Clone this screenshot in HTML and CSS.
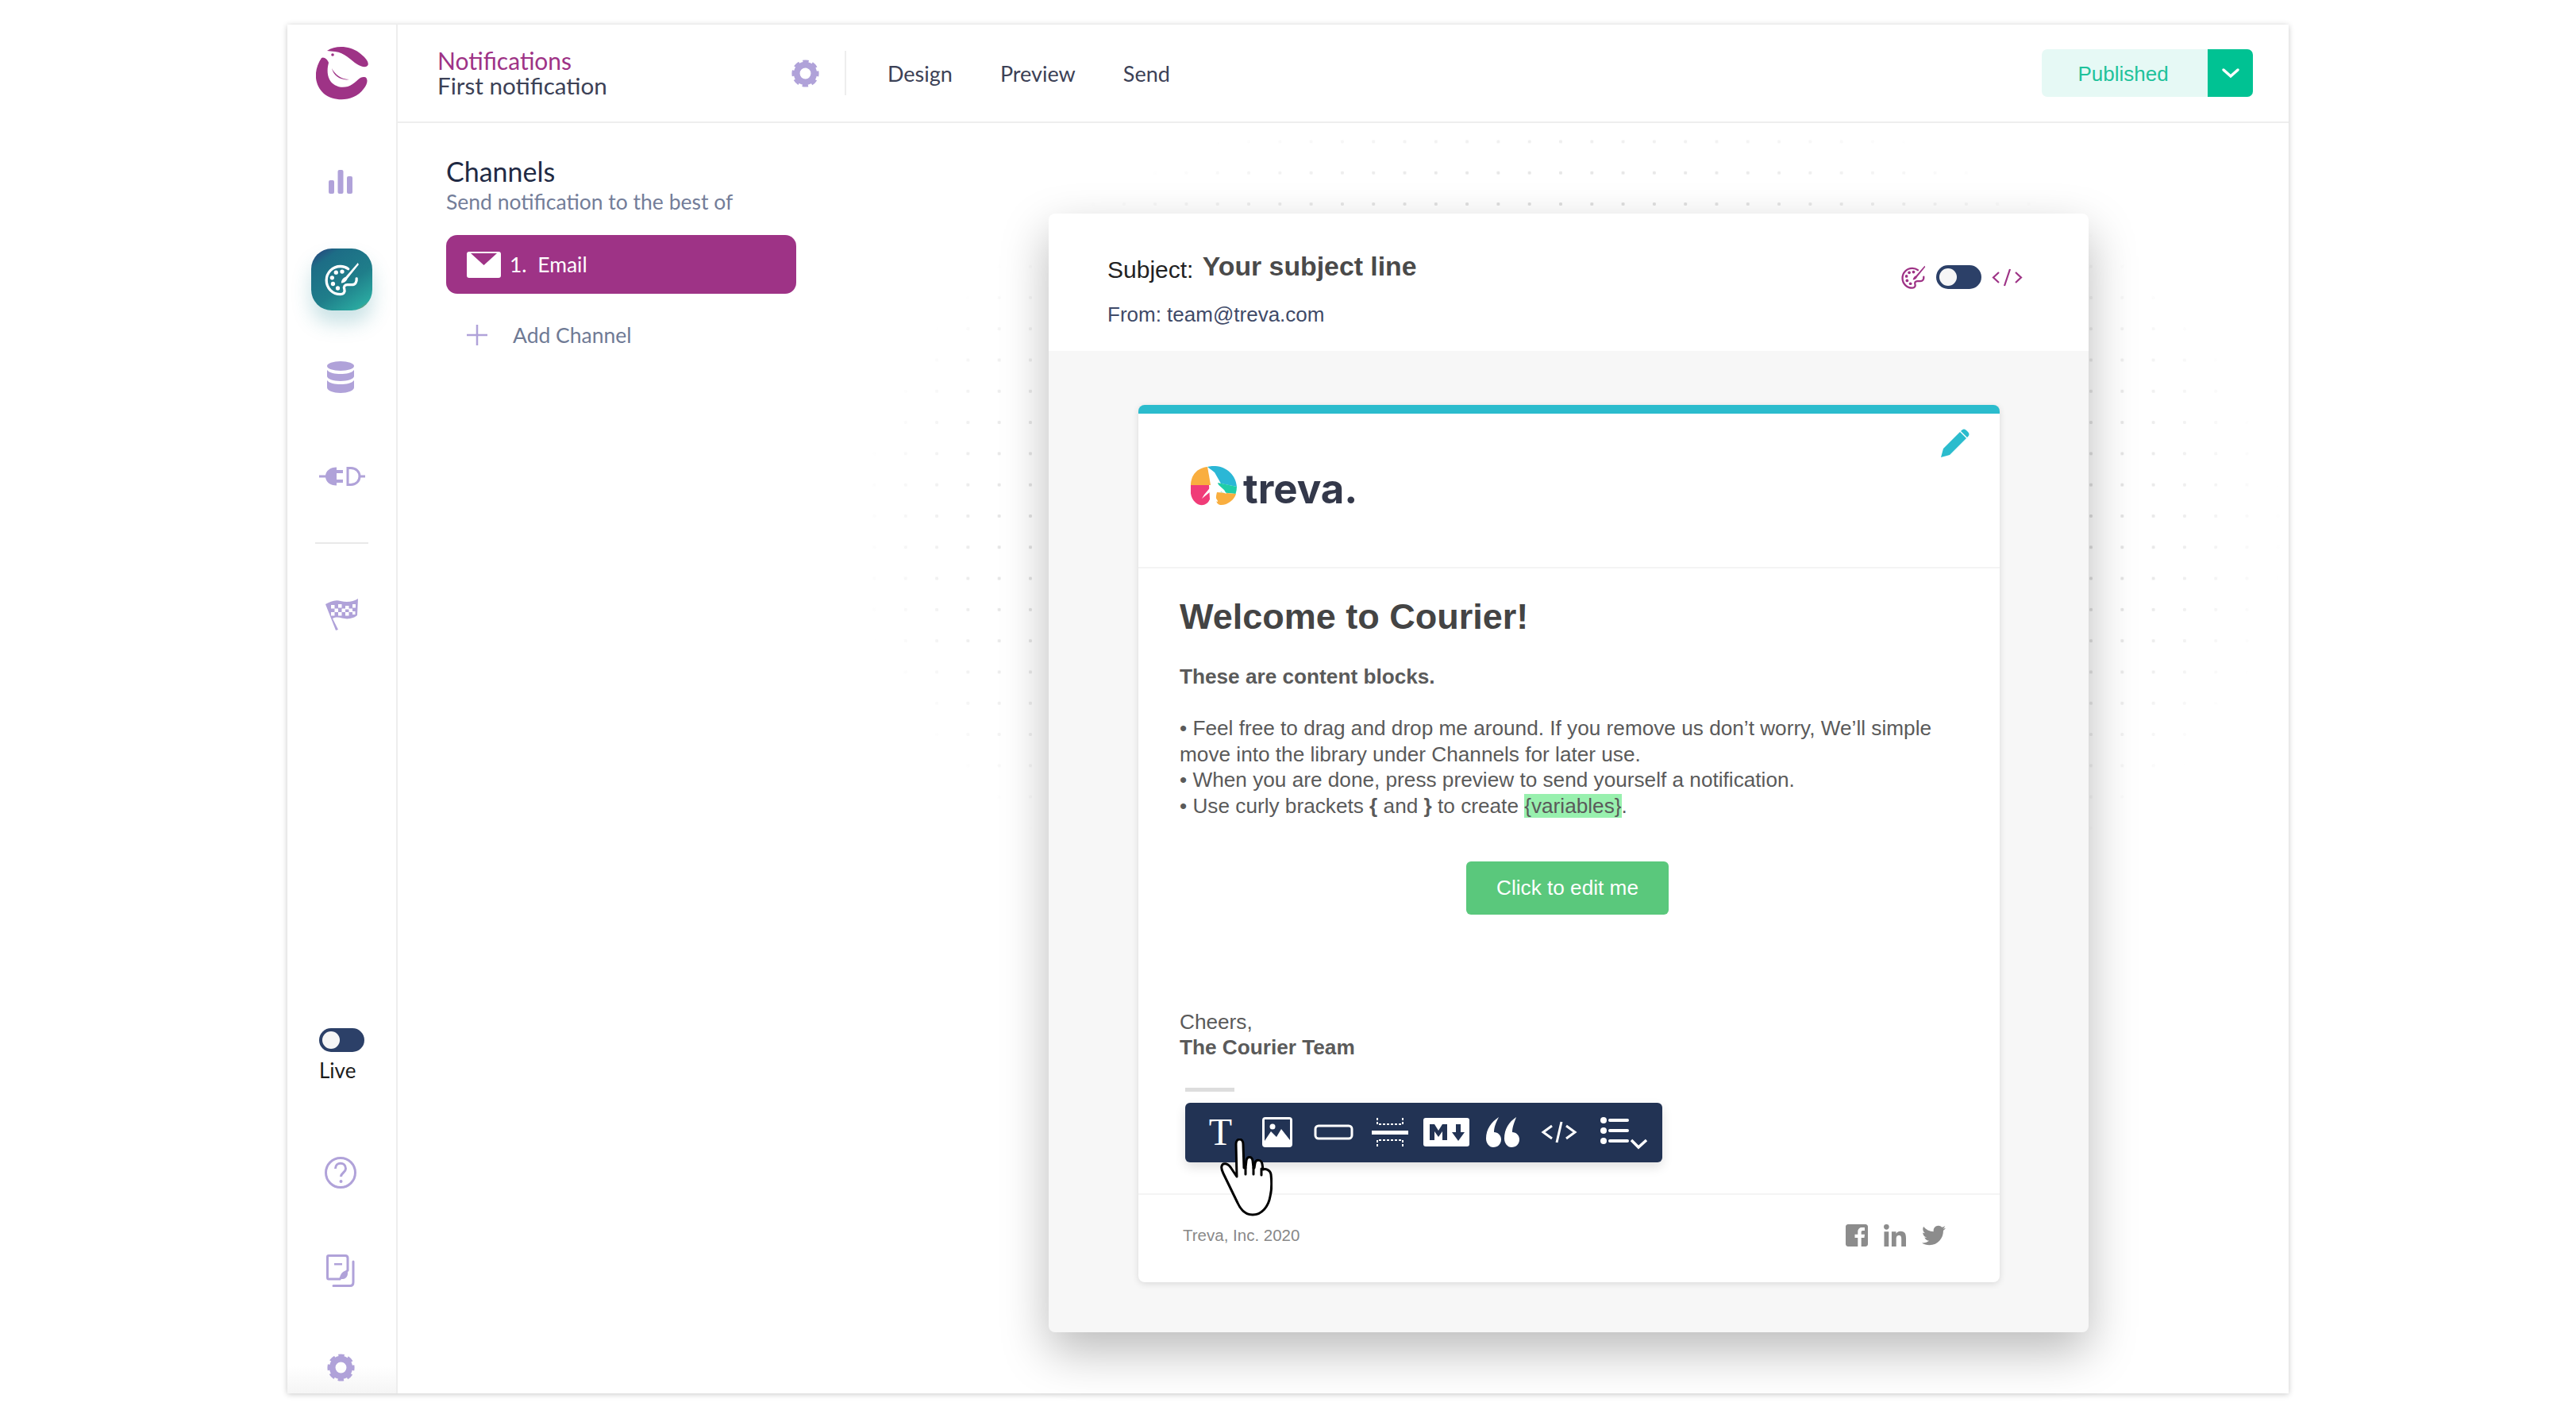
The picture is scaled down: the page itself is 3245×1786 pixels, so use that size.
FILE: index.html
```html
<!DOCTYPE html>
<html lang="en">

<head>
    <meta charset="UTF-8">
    <meta name="viewport" content="width=device-width, initial-scale=1.0">
    <title>First notification</title>
    <link rel="stylesheet" href="styles.css">
</head>

<body>
    <svg class="defs" width="0" height="0">
        <symbol id="gear" viewBox="0 0 34 34">
            <circle cx="17" cy="17" r="10.5" fill="none" stroke="currentColor" stroke-width="7.5"></circle>
            <circle cx="17" cy="17" r="14.6" fill="none" stroke="currentColor" stroke-width="4" stroke-dasharray="7 4.47" stroke-dashoffset="3.5"></circle>
        </symbol>
        <symbol id="palette" viewBox="0 0 40 40">
            <path d="M27 8C24 5.500 21 5 18 5 9 5 2 12 2 21c0 9 7 16 16 16 4 0 5.500-3 4.500-6-1-3 .5-5 3.500-5h5c4 0 6-3 5.500-7" fill="none" stroke="currentColor" stroke-width="3" stroke-linecap="round"></path>
            <circle cx="13" cy="12" r="2.400" fill="currentColor"></circle>
            <circle cx="8.500" cy="18" r="2.400" fill="currentColor"></circle>
            <circle cx="9.500" cy="25" r="2.400" fill="currentColor"></circle>
            <circle cx="15" cy="30" r="2.400" fill="currentColor"></circle>
            <circle cx="20" cy="11" r="2.400" fill="currentColor"></circle>
            <path d="M38 1 24 17c-3 1-5 4-5 7 3 0 6-2 7-5L39 3z" fill="currentColor"></path>
        </symbol>
    </svg>

    <div class="app">
        <aside class="sidebar">
            <svg class="logo" viewBox="0 0 66 68">
                <path d="M14 6C24-1 42-1 54 8c8 6 13 12 11.500 16-2.500 4-8.500 2-13.500-1C44 18 36 8 24 7c-4-.5-7-.5-10-1z"></path>
                <path d="M7 15C-3 30-3 48 10 60c14 11 38 10 50-6 7-8 5-16 0-15-5 0-8 5-14 9-10 7-24 4-29-6-4-8-2-17-1-21-1-4-6-8-9-6z"></path>
                <path d="M20 28c4 8 12 14 22 14-9 2-20-4-22-14z"></path>
                <circle cx="21" cy="11" r="1.800"></circle>
            </svg>

            <svg class="side-icon nudge bars" width="30" height="30" viewBox="0 0 30 30">
                <rect x="0" y="13" width="7" height="17" rx="2"></rect>
                <rect x="11.500" y="0" width="7" height="30" rx="2"></rect>
                <rect x="23" y="8" width="7" height="22" rx="2"></rect>
            </svg>

            <div class="tile">
                <svg width="44" height="44"><use href="#palette"></use></svg>
            </div>

            <svg class="side-icon nudge db" width="36" height="40" viewBox="0 0 36 40">
                <ellipse cx="18" cy="6" rx="17" ry="6"></ellipse>
                <path d="M1 11c3 4 10 5 17 5s14-1 17-5v8c0 3-8 6-17 6S1 22 1 19z"></path>
                <path d="M1 24c3 4 10 5 17 5s14-1 17-5v9c0 4-8 7-17 7S1 37 1 33z"></path>
            </svg>

            <svg class="side-icon plug" width="58" height="24" viewBox="0 0 58 24">
                <path d="M0 10.500h9v3H0zM8 12C8 5 14 .5 22 .5v23C14 23.500 8 19 8 12z"></path>
                <path d="M22 4h8v4h-8zM22 16h8v4h-8z"></path>
                <path d="M36 1.500h4c7 0 11 5 11 10.500s-4 10.500-11 10.500h-4z" fill="none" stroke="#b0a2d9" stroke-width="3"></path>
                <path d="M50 10.500h8v3h-8z"></path>
            </svg>

            <div class="side-rule"></div>

            <svg class="side-icon flag" width="42" height="42" viewBox="0 0 42 42">
                <path d="M0 8 13 41l3-1-7-14c8-4 13 2 22 0 4-1 7-2 9-4l1-21C35 5 27 6 19 4 12 2 6 5 0 8z"></path>
                <path d="M7 9h4.500v4.500H7zM16 8h4.500v4.500H16zM25 10h4.500v4.500H25zM34 8h4v4.500h-4zM11.500 13.500H16V18h-4.500zM20.500 13.500H25V18h-4.500zM29.500 13.500H34V18h-4.500zM7 18h4.500v4.500H7zM16 18h4.500v4.500H16zM25 18h4.500v4.500H25zM34 17h3.500v4H34z" fill="#fff"></path>
            </svg>

            <div class="toggle live-toggle"><span class="knob"></span></div>
            <div class="live-label">Live</div>

            <svg class="side-icon nudge help" width="40" height="40" viewBox="0 0 40 40">
                <circle cx="20" cy="20" r="18.500" fill="none" stroke="#b0a2d9" stroke-width="3"></circle>
                <path d="M13.500 15c0-9 13-9 13 0 0 5-6 5-6 10" fill="none" stroke="#b0a2d9" stroke-width="3"></path>
                <circle cx="20.500" cy="31" r="2"></circle>
            </svg>

            <svg class="side-icon nudge pages" width="36" height="41" viewBox="0 0 36 41">
                <path d="M3 1.500h21c2 0 3 1 3 3V20L17 31H3c-1 0-1.500-1-1.500-2V3c0-1 .5-1.500 1.500-1.500z" fill="none" stroke="#b0a2d9" stroke-width="3"></path>
                <path d="M10 11h10v2.500H10zM27 20v4c0 4-3 7-6 7h-4c0-6 4-11 10-11z"></path>
                <path d="M34 9v26c0 3-1 4.500-4 4.500H9" fill="none" stroke="#b0a2d9" stroke-width="3" stroke-linecap="round"></path>
            </svg>

            <svg class="side-gear nudge" width="35" height="35"><use href="#gear"></use></svg>
        </aside>

        <main class="main">
            <header class="topbar">
                <div class="crumbs">
                    <div class="crumb-parent">Notifications</div>
                    <div class="crumb-name">First notification</div>
                </div>
                <svg class="top-gear" width="35" height="35"><use href="#gear"></use></svg>
                <nav class="tabs">
                    <span>Design</span>
                    <span>Preview</span>
                    <span>Send</span>
                </nav>
                <div class="publish">
                    <div class="publish-label">Published</div>
                    <div class="publish-arrow">
                        <svg width="24" height="14" viewBox="0 0 24 14"><path d="M3 3l9 8 9-8" fill="none" stroke="#fff" stroke-width="3.500" stroke-linecap="round"></path></svg>
                    </div>
                </div>
            </header>

            <section class="content">
                <div class="dots"></div>

                <div class="channels">
                    <h2>Channels</h2>
                    <p>Send notification to the best of</p>
                    <div class="channel-active">
                        <svg width="43" height="33" viewBox="0 0 43 33">
                            <rect width="43" height="33" rx="3" fill="#fff"></rect>
                            <path d="M5 2h33L21.500 17z" fill="#9e3386"></path>
                        </svg>
                        <span>1.&nbsp; Email</span>
                    </div>
                    <div class="channel-add">
                        <svg width="26" height="26" viewBox="0 0 26 26"><path d="M13 0v26M0 13h26" stroke="#b0a2d9" stroke-width="2.500"></path></svg>
                        <span>Add Channel</span>
                    </div>
                </div>

                <div class="preview">
                    <div class="preview-head">
                        <div>
                            <div class="subject"><span class="subject-label">Subject:</span> <b>Your subject line</b></div>
                            <div class="from">From: team@treva.com</div>
                        </div>
                        <div class="mode">
                            <svg class="mode-palette" width="31" height="31"><use href="#palette"></use></svg>
                            <div class="toggle"><span class="knob"></span></div>
                            <svg width="39" height="25" viewBox="0 0 39 25">
                                <path d="M9 6 2 12.500 9 19M30 6l7 6.500L30 19M23 2l-7 21" fill="none" stroke="#9e3386" stroke-width="2.200"></path>
                            </svg>
                        </div>
                    </div>

                    <div class="preview-body">
                        <div class="email">
                            <svg class="pencil" width="36" height="36" viewBox="0 0 36 36">
                                <path d="M0 36l3-11L24 4l8 8-21 21zM26 2c2-2 4-2 6 0l2 2c2 2 2 4 0 6l-1 1-8-8z" fill="#2bbccd"></path>
                            </svg>

                            <div class="email-logo">
                                <svg width="58" height="50" viewBox="0 0 58 50">
                                    <path d="M21 1C9 2 0 11 0 24l25 0-2-12z" fill="#f9ae3f"></path>
                                    <path d="M21 1c3-1 7-1 10-1 15 1 26 12 27 26L38 22 30 8z" fill="#2bb7d6"></path>
                                    <path d="M58 26c0 3-.5 6-1.500 9L38 33l-4-12z" fill="#1fcda8"></path>
                                    <path d="M0 24c-1 9 0 17 6 22 7 6 15 3 18-4l-1-18z" fill="#f03c78"></path>
                                    <path d="M33 33l24 2c-2 8-12 15-20 14-6-1-6-9-4-16z" fill="#f9ae3f"></path>
                                    <path d="M29 9c2 1 3 7 3 12l10 9 3 5-13-5-1 9 3 5v1l-6-2-6 4 3-7 0-8-11 9 3-5 11-13c0-6 1-13 1-14z" fill="#fff"></path>
                                </svg>
                                <span class="treva">treva.</span>
                            </div>

                            <div class="email-text">
                                <h1>Welcome to Courier!</h1>
                                <p class="lead">These are content blocks.</p>
                                <p class="bullets">
                                    • Feel free to drag and drop me around. If you remove us don’t worry, We’ll simple<br>
                                    move into the library under Channels for later use.<br>
                                    • When you are done, press preview to send yourself a notification.<br>
                                    • Use curly brackets <b>{</b> and <b>}</b> to create <span class="variable">{variables}</span>.
                                </p>
                                <div class="cta">Click to edit me</div>
                                <p class="signoff">Cheers,<br><b>The Courier Team</b></p>
                            </div>

                            <div class="drag-bar"></div>

                            <div class="toolbar">
                                <span class="tool-t">T</span>
                                <svg width="38" height="38" viewBox="0 0 38 38">
                                    <rect width="38" height="38" rx="4" fill="#fff"></rect>
                                    <rect x="3" y="3" width="32" height="32" fill="#223354"></rect>
                                    <circle cx="13" cy="12" r="3.500" fill="#fff"></circle>
                                    <path d="M3 30l8-12 7 7 6-10 11 14v6H3z" fill="#fff"></path>
                                </svg>
                                <svg width="50" height="20" viewBox="0 0 50 20">
                                    <rect x="2" y="2" width="46" height="16" rx="4" fill="none" stroke="#fff" stroke-width="3"></rect>
                                </svg>
                                <svg width="46" height="38" viewBox="0 0 46 38">
                                    <path d="M0 17h46v5H0z" fill="#fff"></path>
                                    <path d="M7 1v8h32V1M7 37v-8h32v8" fill="none" stroke="#fff" stroke-width="2" stroke-dasharray="3 2"></path>
                                </svg>
                                <svg width="58" height="36" viewBox="0 0 58 36">
                                    <rect width="58" height="36" rx="3" fill="#fff"></rect>
                                    <path d="M8 28V8h6l5 8 5-8h6v20h-6V17l-5 7-5-7v11zM41 8h6v10h5L44 29l-8-11h5z" fill="#223354"></path>
                                </svg>
                                <svg width="42" height="38" viewBox="0 0 42 38">
                                    <path d="M16 0C7 6 0 15 0 27c0 6 4 11 9 11 6 0 10-4 10-10 0-5-4-9-9-9 0-7 3-13 6-19zM38 0C29 6 23 15 23 27c0 6 4 11 9 11 6 0 10-4 10-10 0-5-4-9-9-9 0-7 3-13 5-19z" fill="#fff"></path>
                                </svg>
                                <svg width="46" height="28" viewBox="0 0 46 28">
                                    <path d="M14 6 3 14l11 8M32 6l11 8-11 8M26 1l-6 26" fill="none" stroke="#fff" stroke-width="3"></path>
                                </svg>
                                <svg class="tool-list" width="62" height="48" viewBox="0 0 62 48">
                                    <circle cx="4" cy="5" r="4" fill="#fff"></circle>
                                    <circle cx="4" cy="18" r="4" fill="#fff"></circle>
                                    <circle cx="4" cy="31" r="4" fill="#fff"></circle>
                                    <path d="M12 5h22M12 18h22M12 31h22" stroke="#fff" stroke-width="4" stroke-linecap="round"></path>
                                    <path d="M39 30l9 9 10-9" fill="none" stroke="#fff" stroke-width="3.500"></path>
                                </svg>
                            </div>

                            <svg class="hand" width="66" height="98" viewBox="0 0 66 98">
                                <path d="M20 7c0-8 9-8 9 0l1 30 2 0 1-9c1-6 7-6 8 0l1 9h1l1-6c1-5 8-5 9 1l1 7c3-1 9 0 10 6 1 9 1 20-1 28-2 12-10 23-22 23-9 0-15-6-19-15L4 44c-3-6-3-10 0-12 3-1 6 0 9 4l8 12z" fill="#fff" stroke="#000" stroke-width="3" stroke-linejoin="round"></path>
                                <path d="M32 37v8M42 37v8M52 38v8" stroke="#000" stroke-width="3" stroke-linecap="round"></path>
                            </svg>

                            <div class="email-foot">
                                <span>Treva, Inc. 2020</span>
                                <div class="social">
                                    <svg width="28" height="32" viewBox="0 0 448 512"><path d="M448 80v352c0 26.500-21.500 48-48 48h-85.300V302.800h60.600l8.700-67.600h-69.300V192c0-19.600 5.400-32.900 33.500-32.900H384V98.700c-6.200-.8-27.400-2.700-52.200-2.700-51.600 0-87 31.500-87 89.400v49.900H184v67.600h60.900V480H48c-26.500 0-48-21.500-48-48V80c0-26.500 21.500-48 48-48h352c26.500 0 48 21.500 48 48z"></path></svg>
                                    <svg width="32" height="32" viewBox="0 0 448 512"><path transform="translate(0 32)" d="M100.280 448H7.400V148.900h92.880zM53.790 108.100C24.090 108.100 0 83.500 0 53.800a53.790 53.790 0 0 1 107.580 0c0 29.700-24.100 54.300-53.790 54.300zM447.900 448h-92.680V302.400c0-34.700-.7-79.200-48.290-79.200-48.290 0-55.690 37.700-55.690 76.700V448h-92.780V148.900h89.080v40.800h1.300c12.400-23.500 42.690-48.300 87.880-48.300 94 0 111.280 61.900 111.280 142.300V448z"></path></svg>
                                    <svg width="30" height="30" viewBox="0 0 512 512"><path d="M459.370 151.716c.325 4.548.325 9.097.325 13.645 0 138.720-105.583 298.558-298.558 298.558-59.452 0-114.680-17.219-161.137-47.106 8.447.974 16.568 1.299 25.340 1.299 49.055 0 94.213-16.568 130.274-44.832-46.132-.975-84.792-31.188-98.112-72.772 6.498.974 12.995 1.624 19.818 1.624 9.421 0 18.843-1.300 27.614-3.573-48.081-9.747-84.143-51.980-84.143-102.985v-1.299c13.969 7.797 30.214 12.670 47.431 13.319-28.264-18.843-46.781-51.005-46.781-87.391 0-19.492 5.197-37.360 14.294-52.954 51.655 63.675 129.300 105.258 216.365 109.807-1.624-7.797-2.599-15.918-2.599-24.040 0-57.828 46.782-104.934 104.934-104.934 30.213 0 57.502 12.670 76.670 33.137 23.715-4.548 46.456-13.320 66.599-25.340-7.798 24.366-24.366 44.833-46.132 57.827 21.117-2.273 41.584-8.122 60.426-16.243-14.292 20.791-32.161 39.308-52.628 54.253z"></path></svg>
                                </div>
                            </div>
                        </div>
                    </div>
                </div>
            </section>
        </main>
    </div>
</body>

</html>
```

FILE: styles.css
```css
body {
    margin: 0;
    height: 1786px;
    overflow: hidden;
    background-color: #ffffff;
    font-family: "Lato", sans-serif;
}

.defs {
    display: block;
    height: 0;
}

.app {
    display: flex;
    width: 2521px;
    height: 1724px;
    margin: 31px 0 0 362px;
    background-color: #ffffff;
    box-shadow: 0 1px 7px rgba(0, 0, 0, 0.22);
}

/* sidebar */

.sidebar {
    display: flex;
    flex-direction: column;
    align-items: center;
    flex: none;
    box-sizing: border-box;
    width: 139px;
    padding-top: 27px;
    border-right: 2px solid #eeeeee;
    background: linear-gradient(to bottom, #ffffff calc(100% - 35px), #f5f5f5);
}

.logo {
    flex: none;
    width: 66px;
    height: 68px;
    fill: #9e3386;
}

.side-icon {
    display: block;
    flex: none;
    fill: #b0a2d9;
}

.nudge {
    margin-right: 3px;
}

.bars {
    margin-top: 88px;
}

.tile {
    display: flex;
    align-items: center;
    justify-content: center;
    flex: none;
    width: 77px;
    height: 78px;
    margin-top: 69px;
    border-radius: 26px;
    color: #ffffff;
    background: linear-gradient(145deg, #2b3a7c 0, #1d6d86 20%, #1f7e8a 58%, #2aa8a0 88%, #e8903a 98%);
    box-shadow: 0 16px 24px rgba(40, 140, 150, 0.25);
}

.db {
    margin-top: 64px;
}

.plug {
    margin-top: 93px;
}

.side-rule {
    flex: none;
    width: 67px;
    height: 2px;
    margin-top: 71px;
    background-color: #e9e9e9;
}

.flag {
    margin-top: 68px;
}

.toggle {
    position: relative;
    flex: none;
    width: 57px;
    height: 30px;
    border-radius: 15px;
    background-color: #2c4068;
}

.knob {
    position: absolute;
    top: 4px;
    left: 4px;
    width: 22px;
    height: 22px;
    border-radius: 50%;
    background-color: #f6f6f6;
}

.live-toggle {
    margin-top: 500px;
}

.live-label {
    align-self: flex-start;
    margin: 6px 0 0 40px;
    font-size: 26px;
    line-height: 34px;
    color: #1c1c1c;
}

.help {
    margin-top: 92px;
}

.pages {
    margin-top: 83px;
}

.side-gear {
    flex: none;
    margin-top: 84px;
    color: #b0a2d9;
}

/* top bar */

.main {
    display: flex;
    flex-direction: column;
    flex: 1;
    min-width: 0;
}

.topbar {
    display: flex;
    align-items: center;
    flex: none;
    box-sizing: border-box;
    height: 124px;
    padding: 0 45px 0 50px;
    border-bottom: 2px solid #eeeeee;
}

.crumbs {
    width: 446px;
    font-size: 30px;
    line-height: 32px;
}

.crumb-parent {
    color: #9e3386;
}

.crumb-name {
    font-size: 29.600px;
    color: #3c4156;
}

.top-gear {
    flex: none;
    color: #b0a2d9;
}

.tabs {
    display: flex;
    align-items: center;
    gap: 60px;
    height: 56px;
    margin-left: 32px;
    padding-left: 52px;
    border-left: 2px solid #eeeeee;
    font-size: 27px;
    color: #3c4156;
}

.publish {
    display: flex;
    height: 60px;
    margin-left: auto;
}

.publish-label {
    box-sizing: border-box;
    width: 209px;
    padding-right: 4px;
    border-radius: 7px 0 0 7px;
    background-color: #e6f9f5;
    font-family: "Liberation Sans", sans-serif;
    font-size: 26px;
    line-height: 62px;
    text-align: center;
    color: #1ec29b;
}

.publish-arrow {
    display: flex;
    align-items: center;
    justify-content: center;
    width: 57px;
    border-radius: 0 7px 7px 0;
    background-color: #00c293;
}

/* content */

.content {
    position: relative;
    display: flex;
    flex: 1;
    min-height: 0;
}

.dots {
    position: absolute;
    inset: 0;
    background-image: radial-gradient(circle, #bcbcbc 1.800px, transparent 2.500px);
    background-size: 39.300px 39.300px;
    background-position: -8.650px 3.750px;
    -webkit-mask-image: radial-gradient(ellipse 900px 570px at 1475px 520px, #000 45%, transparent 100%);
    mask-image: radial-gradient(ellipse 900px 570px at 1475px 520px, #000 45%, transparent 100%);
}

.channels {
    position: relative;
    flex: none;
    box-sizing: border-box;
    width: 820px;
    padding: 41px 0 0 61px;
}

.channels h2 {
    margin: 0;
    font-size: 34px;
    font-weight: 400;
    line-height: 40px;
    color: #1f2a44;
}

.channels p {
    margin: 0;
    font-size: 26.500px;
    line-height: 36px;
    color: #737d99;
}

.channel-active {
    display: flex;
    align-items: center;
    gap: 11px;
    box-sizing: border-box;
    width: 441px;
    height: 74px;
    margin-top: 24px;
    padding-left: 26px;
    border-radius: 14px;
    background-color: #9e3386;
    font-size: 26.500px;
    color: #ffffff;
}

.channel-add {
    display: flex;
    align-items: center;
    gap: 32px;
    margin-top: 36px;
    padding-left: 26px;
    font-size: 26.500px;
    color: #6f7a95;
}

.preview {
    position: relative;
    display: flex;
    flex-direction: column;
    flex: none;
    width: 1310px;
    height: 1409px;
    margin-top: 114px;
    border-radius: 8px;
    background-color: #f7f7f7;
    box-shadow: 0 24px 60px rgba(0, 0, 0, 0.27);
    font-family: "Liberation Sans", sans-serif;
}

.preview-head {
    display: flex;
    align-items: flex-start;
    justify-content: space-between;
    flex: none;
    box-sizing: border-box;
    height: 173px;
    padding: 42px 83px 0 74px;
    border-radius: 8px 8px 0 0;
    background-color: #ffffff;
}

.subject {
    font-size: 30px;
    line-height: 48px;
    color: #222222;
}

.subject-label {
    position: relative;
    top: 3px;
}

.subject b {
    margin-left: 3px;
    font-size: 33.800px;
    color: #4a4a4a;
}

.from {
    margin-top: 18px;
    font-size: 26px;
    line-height: 34px;
    color: #3f4a68;
}

.mode {
    display: flex;
    align-items: center;
    gap: 13px;
    height: 30px;
    margin-top: 23px;
    color: #9e3386;
}

.preview-body {
    flex: 1;
    padding: 68px 0 0 113px;
}

.email {
    position: relative;
    box-sizing: border-box;
    width: 1085px;
    height: 1105px;
    border-top: 11px solid #2bbccd;
    border-radius: 8px;
    background-color: #ffffff;
    box-shadow: 0 2px 8px rgba(0, 0, 0, 0.12);
}

.pencil {
    position: absolute;
    top: 19px;
    right: 38px;
}

.email-logo {
    display: flex;
    align-items: center;
    gap: 8px;
    box-sizing: border-box;
    height: 195px;
    padding: 0 0 11px 66px;
    border-bottom: 2px solid #f4f4f4;
}

.treva {
    position: relative;
    top: 4px;
    font-family: "Inter", sans-serif;
    font-size: 51px;
    font-weight: 700;
    line-height: 50px;
    color: #33384a;
}

.email-text {
    padding: 34px 0 0 52px;
    color: #5a5a5a;
    font-size: 26.200px;
    line-height: 32.400px;
}

.email-text h1 {
    margin: 0;
    font-size: 45px;
    line-height: 54px;
    color: #444444;
}

.email-text p {
    margin: 0;
}

.email-text .lead {
    margin-top: 32px;
    font-weight: 700;
}

.email-text .bullets {
    margin-top: 33px;
}

.variable {
    background-color: #98f0ae;
}

.cta {
    width: 255px;
    height: 67px;
    margin: 54px 0 0 361px;
    border-radius: 6px;
    background-color: #5ac87c;
    line-height: 67px;
    text-align: center;
    color: #ffffff;
}

.email-text .signoff {
    margin-top: 119px;
}

.drag-bar {
    width: 62px;
    height: 5px;
    margin: 34px 0 0 59px;
    background-color: #dddddd;
}

.toolbar {
    display: grid;
    grid-template-columns: repeat(8, 71px);
    align-items: center;
    justify-items: center;
    box-sizing: border-box;
    width: 601px;
    height: 75px;
    margin: 14px 0 0 59px;
    padding-left: 9px;
    border-radius: 6px;
    background-color: #223354;
    box-shadow: 0 6px 14px rgba(0, 0, 0, 0.12);
}

.tool-t {
    font-family: "Liberation Serif", serif;
    font-size: 48px;
    line-height: 52px;
    color: #ffffff;
}

.tool-list {
    margin: 8px 0 0 25px;
}

.hand {
    position: absolute;
    top: 913px;
    left: 103px;
}

.email-foot {
    display: flex;
    align-items: center;
    justify-content: space-between;
    box-sizing: border-box;
    height: 108px;
    margin-top: 39px;
    padding: 0 68px 4px 56px;
    border-top: 2px solid #f4f4f4;
    font-size: 20.500px;
    color: #888888;
}

.social {
    display: flex;
    align-items: center;
    gap: 18px;
    fill: #8c8c8c;
}
```
